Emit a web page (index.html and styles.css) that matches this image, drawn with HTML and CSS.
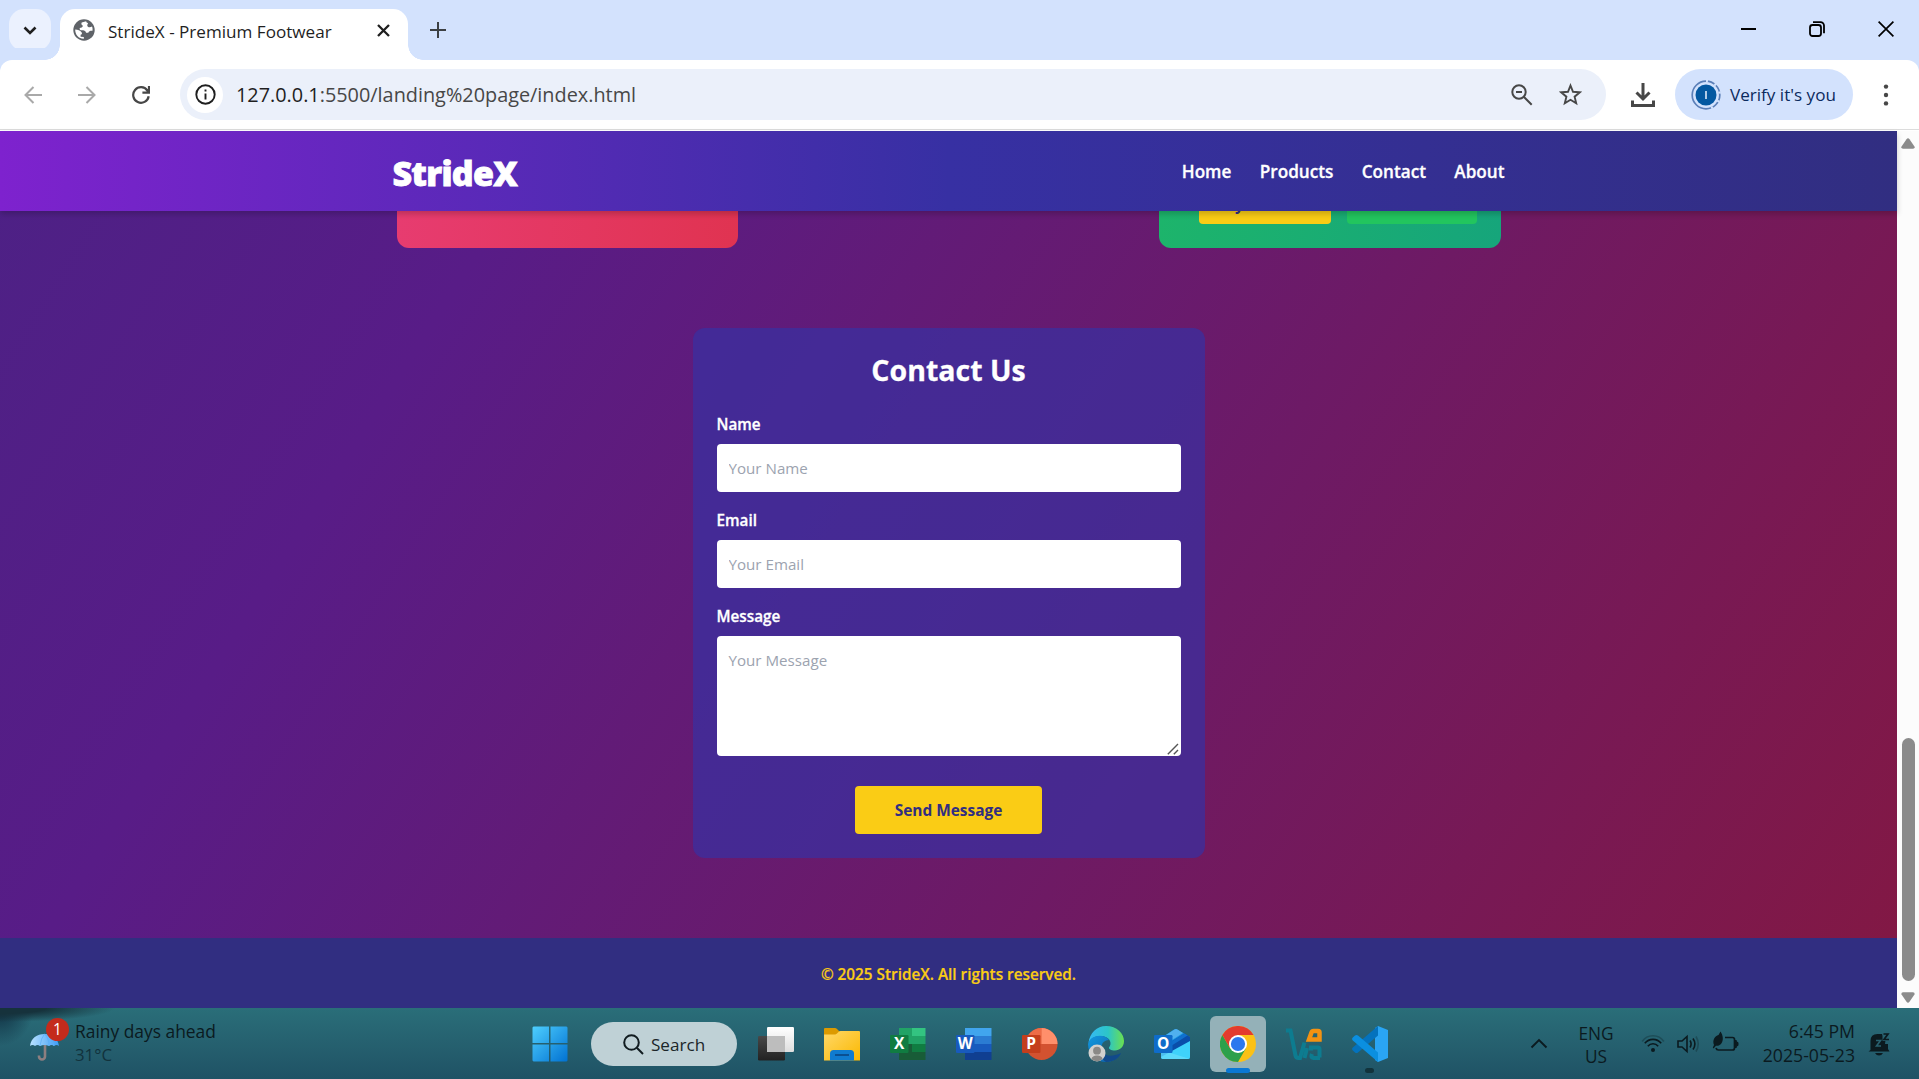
FILE: index.html
```html
<!DOCTYPE html>
<html lang="en">
<head>
<meta charset="utf-8">
<title>StrideX - Premium Footwear</title>
<link rel="stylesheet" href="styles.css">
</head>
<body>
<div class="screen">
  <div class="tab-strip">
    <div class="tab-search">
      <svg width="14" height="9" viewBox="0 0 14 9" fill="none" stroke="#1f1f1f" stroke-width="2.6"><path d="M1.5 1.5 7 7l5.500-5.500"/></svg>
    </div>
    <div class="tab">
      <svg class="globe" width="22" height="22" viewBox="0 0 22 22"><circle cx="11" cy="11" r="10.700" fill="#5f6368"/><path fill="#fff" d="M13.200 2.300 8.700 3.600c-.8 1.500 0 2.800 1.300 3.200-.5 1.800-1.700 2.200-3.300 2.200-.2 1.600.4 2.300 1.900 2.300 2.400 0 4 .6 4.500 2.400h2.200c.6-1.500 1.700-2 4.200-1.900.2-1.900 0-3.200-.5-4.300-1.400 1-3 1-4.100.2-1-.8-.8-2.300.2-3.500-1.200-.3-1.900-.9-1.900-1.900zM2.200 10.600c2.700.2 5 1 6.300 2.600 1 1.200.3 2.300-.9 2.600v2l3.300.3c-.2.700-.2 1.200 0 1.700-5 .2-8.900-4-8.700-9.200z"/></svg>
      <span class="tab-title">StrideX - Premium Footwear</span>
      <svg width="13" height="13" viewBox="0 0 13 13" stroke="#1f1f1f" stroke-width="2.300"><path d="M1 1l11 11M12 1 1 12"/></svg>
    </div>
    <svg class="new-tab" width="16" height="16" viewBox="0 0 16 16" stroke="#3c4043" stroke-width="2"><path d="M8 0v16M0 8h16"/></svg>
    <div class="window-controls">
      <svg width="15" height="16" viewBox="0 0 15 16" stroke="#000" stroke-width="2"><path d="M0 8h15"/></svg>
      <svg width="16" height="16" viewBox="0 0 16 16" fill="none" stroke="#000" stroke-width="1.800"><rect x="1" y="4" width="11" height="11" rx="2.500"/><path d="M4 1.100h7.500a3.500 3.500 0 0 1 3.500 3.500v7.600"/></svg>
      <svg width="16" height="16" viewBox="0 0 16 16" stroke="#000" stroke-width="1.700"><path d="M.6.600l14.800 14.800M15.400.600.600 15.400"/></svg>
    </div>
  </div>

  <div class="toolbar">
    <svg class="tool-back" width="18" height="18" viewBox="0 0 18 18" fill="none" stroke="#a9a9a9" stroke-width="2"><path d="M9.500 1 1.500 9l8 8M1.500 9H18"/></svg>
    <svg class="tool-forward" width="18" height="18" viewBox="0 0 18 18" fill="none" stroke="#a9a9a9" stroke-width="2"><path d="M8.500 1l8 8-8 8M16.500 9H0"/></svg>
    <svg class="tool-reload" width="18" height="18" viewBox="0 0 18 18" fill="none" stroke="#474747" stroke-width="2.200"><path d="M16.700 10.300A7.800 7.800 0 1 1 15.400 4.500L16.900 6.500M17 0v6.600h-6.600"/></svg>
    <div class="address">
      <span class="site-info"><svg width="21" height="21" viewBox="0 0 21 21" fill="none" stroke="#1f1f1f" stroke-width="1.900"><circle cx="10.500" cy="10.500" r="9.200"/><path d="M10.500 9.500v6M10.500 5.500v2.100"/></svg></span>
      <span class="url"><b>127.0.0.1</b>:5500/landing%20page/index.html</span>
      <svg class="zoom-out" width="22" height="22" viewBox="0 0 22 22" fill="none" stroke="#474747" stroke-width="2"><circle cx="8" cy="8" r="6.700"/><path d="M13 13l7.700 7.700M5 8h6"/></svg>
      <svg width="23" height="23" viewBox="0 0 23 23" fill="none" stroke="#474747" stroke-width="1.900"><path d="M11.500 2.500l2.500 6.300 6.800.5-5.200 4.400 1.600 6.600-5.700-3.500-5.700 3.500 1.600-6.600-5.200-4.400 6.800-.5z"/></svg>
    </div>
    <svg class="download" width="24" height="24" viewBox="0 0 24 24" fill="none" stroke="#474747" stroke-width="3"><path d="M12 0v15M5.500 9.500 12 16l6.500-6.500M1.500 17.500v5h21v-5"/></svg>
    <div class="profile">
      <svg width="30" height="30" viewBox="0 0 30 30"><circle cx="15" cy="15" r="13.800" fill="none" stroke="#5b7fb8" stroke-width="1.700"/><path d="M15 1.200A13.800 13.800 0 0 1 15 28.800" fill="none" stroke="#d3e3fd" stroke-width="2.500" stroke-dasharray="2 7"/><circle cx="15" cy="15" r="10.500" fill="#0358a1"/><path d="M15 11v8" stroke="#c5d9ef" stroke-width="1.800"/></svg>
      <span>Verify it's you</span>
    </div>
    <svg class="menu-dots" width="6" height="22" viewBox="0 0 6 22" fill="#474747"><circle cx="3" cy="2.600" r="2.200"/><circle cx="3" cy="11" r="2.200"/><circle cx="3" cy="19.400" r="2.200"/></svg>
  </div>

  <div class="viewport">
    <div class="page">
      <header class="site-header">
        <div class="header-inner">
          <div class="logo">StrideX</div>
          <nav class="nav"><a>Home</a><a>Products</a><a>Contact</a><a>About</a></nav>
        </div>
      </header>
      <main class="main">
        <section class="products">
          <div class="product product-red"></div>
          <div class="product product-green">
            <button class="buy">Buy Now</button>
            <button class="cart"></button>
          </div>
        </section>
        <form class="contact">
          <h2>Contact Us</h2>
          <label>Name</label>
          <input type="text" placeholder="Your Name">
          <label>Email</label>
          <input type="email" placeholder="Your Email">
          <label>Message</label>
          <div class="message-box">
            <textarea placeholder="Your Message"></textarea>
            <svg class="grip" width="12" height="12" viewBox="0 0 12 12" stroke="#555" stroke-width="1.400"><path d="M.8 11.200 11 1M6.800 11.200 11 7"/></svg>
          </div>
          <button type="button" class="send">Send Message</button>
        </form>
      </main>
      <footer class="footer">© 2025 StrideX. All rights reserved.</footer>
    </div>
    <div class="scrollbar">
      <svg width="14" height="11" viewBox="0 0 14 11" fill="#8b8b8b"><path d="M5.500 1.200q1.500-1.800 3 0l5 7.300q.6 2-1.500 2.300H2Q-.1 10.500.5 8.500z"/></svg>
      <div class="thumb"></div>
      <svg width="14" height="11" viewBox="0 0 14 11" fill="#8b8b8b"><path d="M5.500 9.800q1.500 1.800 3 0l5-7.300Q14.100.5 12 .2H2Q-.1.500.5 2.500z"/></svg>
    </div>
  </div>

  <div class="taskbar">
    <div class="weather">
      <div class="weather-icon">
        <svg width="34" height="32" viewBox="0 0 34 32"><defs><linearGradient id="um"><stop offset="0" stop-color="#b9e2ff"/><stop offset="1" stop-color="#3d9cf5"/></linearGradient></defs><path d="M16 14v11.500a3 3 0 0 1-6 0v-1" fill="none" stroke="#8d7f80" stroke-width="2.600"/><path d="M1 15C2 7 8 3 15.500 3S29 7 30 15q-2.500-2-5 0-2.500-2-5 0-4.500-2-9 0-2.500-2-5 0-2.500-2-5 0z" fill="url(#um)"/><path d="M11 15q1-8 4.500-12Q20 7 20 15M25 15q-2-9-9.500-12" fill="none" stroke="#5cb0f7" stroke-width=".8"/></svg>
        <span class="badge">1</span>
      </div>
      <div class="weather-text"><span>Rainy days ahead</span><span class="temp">31°C</span></div>
    </div>
    <div class="apps">
      <div class="app"><svg width="36" height="36" viewBox="0 0 36 36"><defs><linearGradient id="wn" gradientUnits="userSpaceOnUse" x1="0" y1="0" x2="36" y2="36"><stop offset="0" stop-color="#4fd0ff"/><stop offset="1" stop-color="#0070d1"/></linearGradient></defs><path fill="url(#wn)" d="M1.500.500H17V17H.500V1.500zM18.500.500H34.500l1 1V17h-17zM.500 18.500H17v17H1.500l-1-1zM18.500 18.500h17v16l-1 1h-16z"/></svg></div>
      <div class="search">
        <svg width="21" height="21" viewBox="0 0 21 21" fill="none" stroke="#111c20" stroke-width="2"><circle cx="8.500" cy="8.500" r="7.300"/><path d="M13.800 13.800l6.200 6.200"/></svg>
        <span>Search</span>
      </div>
      <div class="app"><svg width="36" height="36" viewBox="0 0 36 36"><defs><linearGradient id="tv" x2="0" y2="1"><stop stop-color="#484848"/><stop offset="1" stop-color="#222"/></linearGradient><linearGradient id="tw" x2="0" y2="1"><stop stop-color="#fff"/><stop offset="1" stop-color="#dedede"/></linearGradient></defs><rect y="10" width="27" height="24.500" rx="1.200" fill="url(#tv)"/><rect x="9" y="1" width="27" height="25" rx="1.200" fill="url(#tw)"/><path d="M9 10h18v16H9z" fill="#bdbdbd"/></svg></div>
      <div class="app"><svg width="36" height="36" viewBox="0 0 36 36"><defs><linearGradient id="fo" x2="1" y2="1"><stop stop-color="#ffd869"/><stop offset="1" stop-color="#fbb800"/></linearGradient></defs><path d="M0 2.500Q0 2 1 2h10q1 0 2 1l3 3-4 5H0z" fill="#dc9a00"/><path d="M0 8.500h11q1 0 2-1L15 5.500q.5-.5 1.500-.5H35q1 0 1 1v28.500H0z" fill="url(#fo)"/><path d="M6 34.500v-7q0-3.500 3.500-3.500h17q3.500 0 3.500 3.500v7z" fill="#0f7bd0"/><path d="M11 29h14" stroke="#0a4f92" stroke-width="2"/></svg></div>
      <div class="app"><svg width="36" height="36" viewBox="0 0 36 36"><path d="M9 2h13.500v16H9z" fill="#21a366"/><path d="M22 2h13.500v8H22z" fill="#33c481"/><path d="M22 10h13.500v8H22z" fill="#21a366"/><path d="M22 18h13.500v8H22z" fill="#107c41"/><path d="M9 18h13v8H9zM9 26h26.500v8H9z" fill="#185c37"/><rect y="9" width="18.500" height="18" rx="1.200" fill="#107c41"/><text class="glyph" x="9.200" y="23.200">X</text></svg></div>
      <div class="app"><svg width="36" height="36" viewBox="0 0 36 36"><path d="M9 2h26.500v8H9z" fill="#41a5ee"/><path d="M9 10h26.500v8H9z" fill="#2b7cd3"/><path d="M9 18h26.500v8H9z" fill="#185abd"/><path d="M9 26h26.500v8H9z" fill="#103f91"/><rect y="9" width="18.500" height="18" rx="1.200" fill="#185abd"/><text class="glyph" x="9.200" y="23">W</text></svg></div>
      <div class="app"><svg width="36" height="36" viewBox="0 0 36 36"><circle cx="19.500" cy="18" r="16" fill="#d35230"/><path d="M3.500 18a16 16 0 0 1 16-16v16z" fill="#ed6c47"/><path d="M19.500 2a16 16 0 0 1 16 16h-16z" fill="#ff8f6b"/><rect y="9" width="18.500" height="18" rx="1.200" fill="#c43e1c"/><text class="glyph" x="9.200" y="23.200">P</text></svg></div>
      <div class="app"><svg width="36" height="36" viewBox="0 0 36 36"><defs><linearGradient id="ed"><stop stop-color="#36b9f5"/><stop offset=".55" stop-color="#2cc5c7"/><stop offset="1" stop-color="#6be04f"/></linearGradient><linearGradient id="ef" x2="1" y2="1"><stop stop-color="#1299e0"/><stop offset="1" stop-color="#0c59a4"/></linearGradient></defs><path d="M.5 17C1.500 7 9 0 18 0c11 0 18 7.500 18 15 0 6-4.500 9.500-9 9.500-4 0-6.500-1.500-6-3 1.500-2 2-4 1-6.500-3-7-18-7-21.500 2z" fill="url(#ed)"/><path d="M0 18C2 9 16 7 21 14c-6 0-9 5-6.500 11 2.500 6 10 8.500 18 3.500C29 33 24 36 18 36 8 36 0 28 0 18z" fill="url(#ef)"/><path d="M14.500 25c2.500 6 10 6 18.500 2-1.500 5-8 9-15 9-5-3-5-8-3.500-11z" fill="#114a8b"/><circle cx="9" cy="27" r="8.500" fill="#d2d0ce"/><circle cx="9" cy="24.700" r="3.900" fill="#8a8886"/><path d="M3.500 33.300c0-5 11-5 11 0a8.500 8.500 0 0 1-11 0z" fill="#8a8886"/></svg></div>
      <div class="app"><svg width="36" height="36" viewBox="0 0 36 36"><path d="M7 12 20 3.500q1.500-1 3 0L36 11v20q0 2-2 2H9q-2 0-2-2z" fill="#1490df"/><path d="M12 9l8.500-5.500q1.500-1 3 0L29 7l-14 9z" fill="#50b0ee"/><path d="M15 17 30.500 7.500l5.500 3.500v6L18 28z" fill="#0a4eaa"/><path d="M15 17l15.500-9.500 3 2L17 20z" fill="#1070ce"/><path d="M36 15v16q0 2-2 2H9q-2 0-2-2z" fill="#3fd2fb"/><path d="M7 24l29 9H9q-2 0-2-2z" fill="#6fe0fc" opacity=".6"/><rect y="9" width="18.500" height="18" rx="1.200" fill="#0f6cca"/><text class="glyph" x="9.200" y="23.200">O</text></svg></div>
      <div class="app app-active"><svg width="36" height="36" viewBox="0 0 36 36"><circle cx="18" cy="18" r="18" fill="#fbc116"/><path d="M2.400 9A18 18 0 0 1 33.600 9H18z" fill="#e33b2e"/><path d="M2.400 9A18 18 0 0 0 18 36l7.800-13.500H10.200z" fill="#2da04b"/><path d="M2.400 9l7.800 13.500L18 9z" fill="#e33b2e"/><circle cx="18" cy="18" r="9" fill="#fff"/><circle cx="18" cy="18" r="7.100" fill="#2c78ee"/></svg><i class="running"></i></div>
      <div class="app"><svg width="36" height="36" viewBox="0 0 36 36" fill="none" stroke="#0d7c90" stroke-width="4"><path d="M0 4.500h4.500l5 25q.5 2.500 3 2.500h1.500l4.500-15.500M21 22l-2.500 10M33.500 31.500V23q0-1.500-1.500-1.500h-7v3M34 32h-6.500q-2.500 0-2-2.500l.5-1.500"/><path d="M33.500 13.500V6.500q0-1.500-1.500-1.500h-4.500q-1.500 0-2 1.500L23 13.500z" stroke="#f39212" stroke-width="4.500"/></svg></div>
      <div class="app"><svg width="36" height="36" viewBox="0 0 36 36"><path d="M26 0l10 4v28l-10 4-3-2V2z" fill="#2aa5f4"/><path d="M26 0v9.500L6 26.500q-1.500 1-3 0L.800 24.500q-1.500-1.500 0-3z" fill="#0472bd"/><path d="M26 36v-9.500L6 9.500q-1.500-1-3 0L.800 11.500q-1.500 1.500 0 3z" fill="#0b8fe0"/></svg><i class="running running-idle"></i></div>
    </div>
    <div class="tray">
      <svg class="caret" width="18" height="11" viewBox="0 0 18 11" fill="none" stroke="#0b1a1f" stroke-width="1.900"><path d="M1.500 9.500 9 2l7.500 7.500"/></svg>
      <div class="lang"><span>ENG</span><span>US</span></div>
      <svg class="wifi" width="24" height="20" viewBox="0 0 24 20" fill="none" stroke="#0b1a1f" stroke-width="1.600"><path d="M1.200 8.500a13 13 0 0 1 21.600 0" stroke-opacity=".3"/><path d="M3.800 10.300a10.500 10.500 0 0 1 16.400 0M6.800 13.200a6.800 6.800 0 0 1 10.400 0"/><circle cx="12" cy="17" r="2" fill="#0b1a1f" stroke="none"/></svg>
      <svg class="speaker" width="26" height="20" viewBox="0 0 26 20" fill="none" stroke="#0b1a1f" stroke-width="1.600"><path d="M3 7h4l5-4.500v15L7 13H3zM15 6.500q2.200 3.500 0 7M18 4.500q3.800 5.500 0 11"/><path d="M21 2.500q4.500 7.500 0 15" stroke-opacity=".3"/></svg>
      <svg class="battery" width="28" height="22" viewBox="0 0 28 22" fill="none" stroke="#0b1a1f" stroke-width="1.700"><path d="M13 6.500h7.500q2 0 2 2v8.500q0 2-2 2H6.500q-2 0-2.500-2"/><path d="M23 9.500h1.300l.7 2h1v3h-1l-.7 2H23z" fill="#0b1a1f"  stroke-width="1"/><path d="M8.500.5c2.500 4 3.500 8.500.5 12.500-1.500 1.500-3.500 2-5 1.800L1.500 17.500.8 16.500 2 14C0 9 3 5 6.500 4z" fill="#0b1a1f" stroke="none"/></svg>
      <div class="clock"><span>6:45 PM</span><span>2025-05-23</span></div>
      <svg class="bell" width="24" height="24" viewBox="0 0 24 24"><path d="M3.500 18V9q0-7 7-7H15l1 2h3l-1 8h3v5l1.500 2.500H1.500zM8 21h8q-1.500 2.500-4 2.500T8 21z" fill="#0b1a1f"/><path d="M9 8.500h4.500l-4 5.500H14" fill="none" stroke="#28616f" stroke-width="1.600"/><path d="M15.500 1h6.500v8h-6.500z" fill="#28616f"/><path d="M16.500 2h4.500l-4 5.500H22" fill="none" stroke="#0b1a1f" stroke-width="1.700"/></svg>
    </div>
  </div>
</div>
</body>
</html>
```
FILE: styles.css
```css
* { box-sizing: border-box; }
body { margin: 0; font-family: "Open Sans", "Noto Sans", sans-serif; }
svg { display: block; flex: none; }
button, input, textarea { font-family: inherit; border: 0; }

.screen { width: 1919px; height: 1079px; display: flex; flex-direction: column; overflow: hidden; }

/* Browser tab strip */
.tab-strip { height: 60px; background: #d3e2fd; display: flex; align-items: flex-start; padding: 9px 10px 0 9px; }
.tab-search { width: 42px; height: 42px; border-radius: 15px; background: #ebf1fe; display: grid; place-items: center; }
.tab { position: relative; z-index: 1; width: 348px; height: 51px; margin-left: 9px; padding: 0 18px 9px 13px; background: #fff; border-radius: 15px 15px 0 0; display: flex; align-items: center; }
.tab::before, .tab::after { content: ""; position: absolute; bottom: 0; width: 15px; height: 15px; }
.tab::before { left: -15px; background: radial-gradient(circle at 0 0, transparent 14.500px, #fff 15px); }
.tab::after { right: -15px; background: radial-gradient(circle at 100% 0, transparent 14.500px, #fff 15px); }
.tab-title { margin: 3px auto 0 13px; font-size: 17.100px; line-height: 24px; color: #1f1f1f; white-space: nowrap; }
.new-tab { margin: 13px 0 0 22px; }
.window-controls { display: flex; gap: 53px; margin: 12px 15px 0 auto; }

/* Browser toolbar */
.toolbar { position: relative; height: 71px; background: #fff; border-radius: 12px 12px 0 0; box-shadow: 0 -12px 0 #d3e2fd; padding: 9px 29px 11px 24px; display: flex; align-items: center; }
.toolbar::after { content: ""; position: absolute; left: 0; right: 0; bottom: 1px; height: 1px; background: #dcdcdc; }
.tool-forward { margin-left: 36px; }
.tool-reload { margin-left: 36px; }
.address { width: 1426px; height: 51px; flex: none; margin-left: 30px; border-radius: 26px; background: #ebf0fa; display: flex; align-items: center; padding: 0 24px 0 7px; }
.site-info { width: 36px; height: 36px; border-radius: 50%; background: #fff; display: grid; place-items: center; }
.url { margin: 0 auto 0 13px; font-size: 19.850px; color: #474747; white-space: nowrap; }
.url b { font-weight: 400; color: #1f1f1f; }
.zoom-out { margin-right: 26px; }
.download { margin-left: 25px; }
.profile { width: 178px; height: 51px; flex: none; margin-left: 20px; border-radius: 26px; background: #d3e2fd; display: flex; align-items: center; gap: 9px; padding-left: 16px; font-size: 17.100px; color: #0b2a5e; white-space: nowrap; }
.menu-dots { margin-left: 30px; }

/* Page viewport */
.viewport { height: 877px; display: flex; }
.page { width: 1897px; display: flex; flex-direction: column; background: linear-gradient(to bottom right, #312e81, #581c87, #831843) 0 100% / 100% 3000px no-repeat; }
.site-header { height: 80px; flex: none; position: relative; z-index: 1; background: linear-gradient(to right, #7e22ce, #3730a3, #312e81); box-shadow: 0 3px 6px rgba(0, 0, 0, .2); }
.header-inner { width: 1112px; height: 100%; margin: 0 auto; display: flex; align-items: center; justify-content: space-between; color: #fff; }
.logo { padding-top: 4px; font-size: 34px; line-height: 40px; font-weight: 800; letter-spacing: -.75px; -webkit-text-stroke: .8px #fff; }
.nav { display: flex; gap: 28.400px; font-size: 17.150px; font-weight: 600; -webkit-text-stroke: .3px #fff; }
.main { flex: 1; }
.products { width: 1104px; height: 37px; margin: 0 auto; display: flex; justify-content: space-between; }
.product { height: 37px; border-radius: 0 0 12px 12px; }
.product-red { width: 341px; background: linear-gradient(96deg, #e73c70, #e03351); }
.product-green { width: 342px; padding: 0 24px 0 40px; display: flex; gap: 16px; background: linear-gradient(96deg, #1db46b, #16a57b); }
.buy, .cart { height: 48px; margin: -35px 0 0; padding: 0; border-radius: 4px; }
.buy { width: 132px; padding: 8px 0 0 16px; background: #facc15; color: #312e81; font-size: 15.500px; font-weight: 700; text-align: left; }
.cart { width: 130px; background: #22c55e; }

.contact { width: 512px; height: 530px; margin: 80px auto 0; padding: 24px; border-radius: 12px; background: rgba(55, 48, 163, .7); color: #fff; display: flex; flex-direction: column; }
.contact h2 { margin: 0 0 23px; font-size: 28.500px; line-height: 37px; font-weight: 700; text-align: center; -webkit-text-stroke: .3px #fff; }
.contact label { font-size: 15.250px; line-height: 24px; margin-bottom: 8px; font-weight: 600; -webkit-text-stroke: .3px #fff; }
.contact input, .contact textarea { width: 464px; margin: 0; padding: 12px 12px; border-radius: 4px; background: #fff; font-size: 15.150px; line-height: 24px; outline: 0; }
.contact input { height: 48px; flex: none; margin-bottom: 16px; }
.message-box { position: relative; height: 120px; }
.contact textarea { display: block; height: 120px; resize: none; }
.grip { position: absolute; right: 2px; bottom: 1px; }
.contact ::placeholder { color: #9ca3af; }
.send { width: 187px; height: 48px; margin: 30px auto 0; border-radius: 4px; background: #facc15; color: #312e81; font-size: 15.450px; font-weight: 700; }
.footer { height: 70px; background: #312e81; color: #facc15; font-size: 15.300px; font-weight: 600; text-align: center; line-height: 73px; -webkit-text-stroke: .2px #facc15; }

.scrollbar { width: 22px; padding: 7px 0 5px; background: #fcfcfc; display: flex; flex-direction: column; align-items: center; }
.thumb { width: 13px; height: 243px; margin: auto 0 11px; border-radius: 7px; background: #8b8b8b; }

/* Taskbar */
.taskbar { height: 71px; display: flex; background: radial-gradient(ellipse 115px 14px at 0 0, #16323c 40%, rgba(22, 50, 60, 0)), radial-gradient(ellipse 34px 38px at 0 0, #14384a 20%, rgba(20, 56, 74, 0)), linear-gradient(#2a6e79, #255f6e 55%, #1f5265); color: #0b1a1f; }
.weather { width: 517px; padding: 10px 0 0 29px; display: flex; gap: 12px; }
.weather-icon { position: relative; width: 34px; padding-top: 13px; }
.badge { position: absolute; left: 17px; top: 0; width: 23px; height: 23px; border-radius: 50%; background: #c42b1c; color: #fff; font-size: 15.500px; line-height: 23px; text-align: center; }
.weather-text { display: flex; flex-direction: column; font-size: 17.400px; line-height: 24px; white-space: nowrap; padding-top: 1px; }
.temp { color: #12323c; font-size: 16.800px; }
.apps { display: flex; align-items: center; height: 71px; }
.app { position: relative; width: 66px; height: 71px; display: grid; place-items: center; }
.app-active::before { content: ""; position: absolute; left: 5px; top: 8px; width: 56px; height: 56px; border-radius: 6px; background: #94b1b8; }
.app-active svg { position: relative; }
.running { position: absolute; left: 21px; bottom: 6px; width: 24px; height: 5px; border-radius: 3px; background: #0a78d4; }
.running-idle { left: 28px; width: 9px; background: #12333c; }
.glyph { font: 700 15.500px "Open Sans", sans-serif; fill: #fff; text-anchor: middle; }
.search { width: 146px; height: 44px; margin: 0 6px 0 8px; border-radius: 22px; background: #bfd1d6; display: flex; align-items: center; gap: 7px; padding: 1px 0 0 32px; font-size: 17.100px; color: #1b2629; }
.tray { flex: 1; display: flex; font-size: 17.700px; line-height: 24px; }
.caret { margin: 30px 0 0 127px; }
.lang { width: 60px; margin: 14px 0 0 18px; display: flex; flex-direction: column; align-items: center; line-height: 23px; font-size: 17.300px; }
.wifi { margin: 25px 0 0 15px; }
.speaker { margin: 26px 0 0 10px; }
.battery { margin: 23px 0 0 11px; }
.clock { width: 115px; margin: 11px 0 0 0; display: flex; flex-direction: column; align-items: flex-end; white-space: nowrap; }
.bell { margin: 24px 0 0 12px; }
```
